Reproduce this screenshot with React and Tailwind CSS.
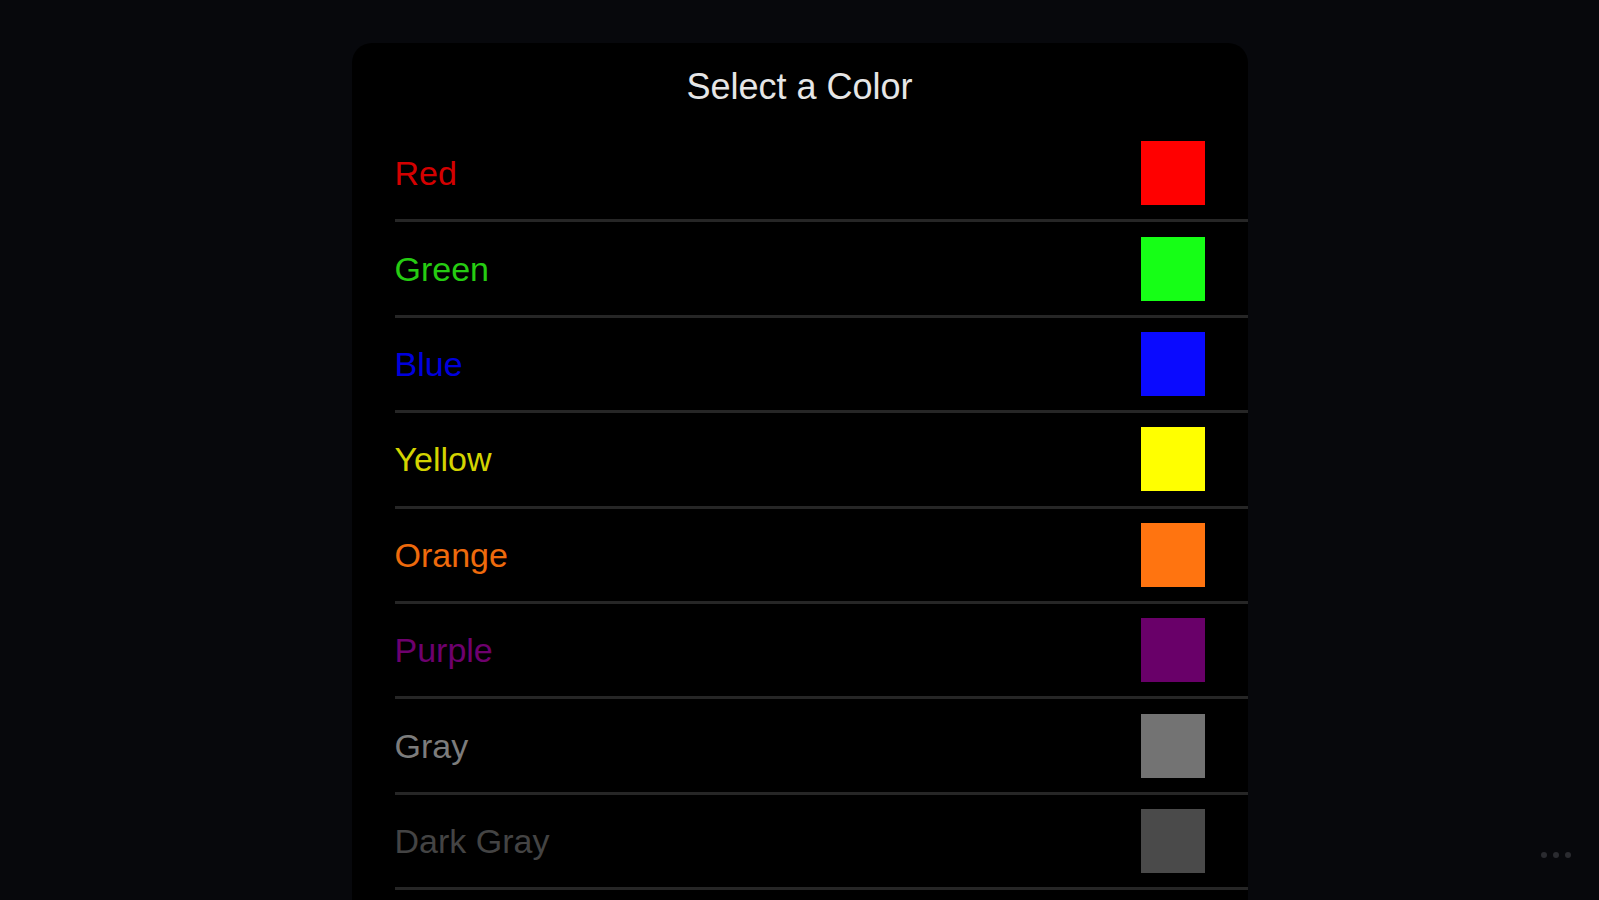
const colors = [
  { name: "Red", text: "text-[#d40000]", swatch: "bg-[#ff0000]" },
  { name: "Green", text: "text-[#26cc12]", swatch: "bg-[#16ff16]" },
  { name: "Blue", text: "text-[#0000dd]", swatch: "bg-[#0a0aff]" },
  { name: "Yellow", text: "text-[#d4d400]", swatch: "bg-[#ffff00]" },
  { name: "Orange", text: "text-[#ee6a0c]", swatch: "bg-[#ff7410]" },
  { name: "Purple", text: "text-[#6e006e]", swatch: "bg-[#690069]" },
  { name: "Gray", text: "text-[#7c7c7c]", swatch: "bg-[#737373]" },
  { name: "Dark Gray", text: "text-[#444444]", swatch: "bg-[#4a4a4a]" },
];

function ColorRow({ color }) {
  return (
    <div className="ml-[43px] flex h-[95.4px] shrink-0 items-center justify-between border-b-[3px] border-[#262626] pr-[43px]">
      <span className={`text-[34px] leading-none ${color.text}`}>{color.name}</span>
      <div className={`h-[64px] w-[64px] ${color.swatch}`} />
    </div>
  );
}

export default function App() {
  return (
    <div className="relative flex h-[900px] flex-col overflow-hidden bg-[#07080c] font-['Liberation_Sans',Arial,sans-serif]">
      <div className="mx-auto mt-[43px] flex w-[896px] flex-1 flex-col rounded-t-[20px] bg-black">
        <h1 className="flex h-[84px] shrink-0 items-center justify-center pt-[4px] text-[36px] font-medium text-[#e6e6e6]">
          Select a Color
        </h1>
        {colors.map((c) => (
          <ColorRow key={c.name} color={c} />
        ))}
      </div>

      {/* page indicator */}
      <div className="absolute bottom-[42px] right-[28px] flex gap-[6px]">
        <span className="h-[6px] w-[6px] rounded-full bg-[#2a2b30]" />
        <span className="h-[6px] w-[6px] rounded-full bg-[#2a2b30]" />
        <span className="h-[6px] w-[6px] rounded-full bg-[#2a2b30]" />
      </div>
    </div>
  );
}
